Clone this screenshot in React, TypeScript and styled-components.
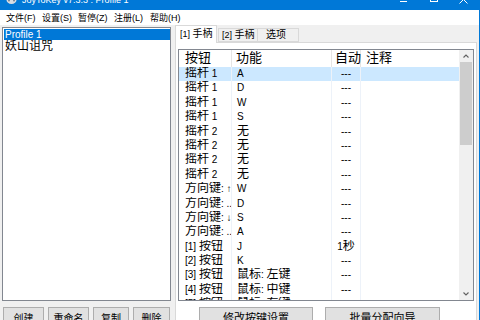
import React from "react";
import styled, { createGlobalStyle } from "styled-components";

const GlobalStyle = createGlobalStyle`
    html, body {
        margin: 0;
        padding: 0;
        background: #f0f0f0;
    }
    body {
        font-family: "Liberation Sans", "Noto Sans CJK SC", sans-serif;
        color: #000;
    }
`;

const Window = styled.div`
    width: 480px;
    height: 320px;
    box-sizing: border-box;
    border-right: 1px solid #0078d7;
    background: #f0f0f0;
    display: flex;
    flex-direction: column;
    overflow: hidden;
`;

const TitleBar = styled.div`
    height: 10px;
    flex-shrink: 0;
    background: #0078d7;
    display: flex;
    align-items: flex-start;
    overflow: hidden;
`;

const TitleIcon = styled.svg`
    margin-left: 6px;
    width: 11px;
    height: 10px;
`;

const TitleText = styled.span`
    margin: -4px 0 0 5px;
    font-size: 9px;
    line-height: 9px;
    color: #fff;
`;

const Controls = styled.div`
    margin-left: auto;
    display: flex;
`;

const ControlButton = styled.div`
    width: 30px;
    height: 10px;
    display: flex;
    justify-content: center;
`;

const MenuBar = styled.div`
    height: 15px;
    flex-shrink: 0;
    background: #fff;
    display: flex;
    align-items: center;
    padding-left: 6px;
    font-size: 9px;
`;

const MenuItem = styled.span`
    width: 36px;
`;

const Body = styled.div`
    flex: 1;
    display: flex;
    min-height: 0;
`;

const LeftPane = styled.div`
    width: 169px;
    margin-left: 2px;
    padding-top: 2px;
    display: flex;
    flex-direction: column;
`;

const ProfileList = styled.div`
    height: 274px;
    flex-shrink: 0;
    box-sizing: border-box;
    border: 1px solid #828790;
    background: #fff;
    padding: 1px 0 0 1px;
`;

const ProfileItem = styled.div<{ $selected?: boolean; $height: number }>`
    height: ${(p) => p.$height}px;
    line-height: ${(p) => p.$height}px;
    font-size: 10px;
    padding-left: 1px;
    white-space: nowrap;
    overflow: hidden;
    background: ${(p) => (p.$selected ? "#0078d7" : "transparent")};
    color: ${(p) => (p.$selected ? "#fff" : "#000")};
`;

const ButtonBar = styled.div<{ $indent?: number }>`
    display: flex;
    gap: ${(p) => (p.$indent ? 12 : 4)}px;
    margin-top: 6px;
    padding-left: ${(p) => p.$indent || 1}px;
`;

const Button = styled.div<{ $width: number; $size: number }>`
    width: ${(p) => p.$width}px;
    height: 20px;
    box-sizing: border-box;
    flex-shrink: 0;
    background: #e1e1e1;
    border: 1px solid #adadad;
    display: flex;
    justify-content: center;
    align-items: center;
    font-size: ${(p) => p.$size}px;
    white-space: nowrap;
`;

const RightPane = styled.div`
    flex: 1;
    margin: 0 2px 0 4px;
    display: flex;
    flex-direction: column;
    min-width: 0;
`;

const TabStrip = styled.div`
    height: 17px;
    flex-shrink: 0;
    display: flex;
    align-items: flex-end;
    position: relative;
    z-index: 1;
`;

const Tab = styled.div<{ $active?: boolean; $width: number; $pad: number }>`
    width: ${(p) => p.$width}px;
    height: ${(p) => (p.$active ? 18 : 14)}px;
    margin-bottom: ${(p) => (p.$active ? -1 : 0)}px;
    margin-right: ${(p) => (p.$active ? 1 : -1)}px;
    box-sizing: border-box;
    border: 1px solid #d9d9d9;
    border-bottom: ${(p) => (p.$active ? "none" : "1px solid #d9d9d9")};
    background: ${(p) => (p.$active ? "#fff" : "#f0f0f0")};
    padding-left: ${(p) => p.$pad}px;
    line-height: ${(p) => (p.$active ? 16 : 12)}px;
    font-size: 9px;
    white-space: nowrap;
    overflow: hidden;
`;

const TabPage = styled.div`
    flex: 1;
    background: #fff;
    border: 1px solid #d9d9d9;
    padding: 6px 2px 0 2px;
    display: flex;
    flex-direction: column;
`;

const ListView = styled.div`
    height: 252px;
    flex-shrink: 0;
    box-sizing: border-box;
    border: 1px solid #828790;
    display: flex;
    overflow: hidden;
`;

const ListContent = styled.div`
    flex: 1;
    display: flex;
    flex-direction: column;
    overflow: hidden;
`;

const Columns = "53px 100px 29px 1fr";

const HeaderRow = styled.div`
    height: 17px;
    flex-shrink: 0;
    display: grid;
    grid-template-columns: ${Columns};
`;

const HeaderCell = styled.div<{ $pad: number }>`
    padding-left: ${(p) => p.$pad}px;
    border-right: 1px solid #e5e5e5;
    font-size: 13px;
    line-height: 15px;
    white-space: nowrap;
    &:last-child {
        border-right: none;
    }
`;

const Row = styled.div<{ $selected?: boolean }>`
    height: 14.4px;
    flex-shrink: 0;
    display: grid;
    grid-template-columns: ${Columns};
    background: ${(p) => (p.$selected ? "#cce8ff" : "transparent")};
`;

const Cell = styled.div<{ $pad?: number; $center?: boolean }>`
    padding-left: ${(p) => p.$pad || 0}px;
    text-align: ${(p) => (p.$center ? "center" : "left")};
    border-right: 1px solid #edf2f9;
    font-size: 10px;
    line-height: 14px;
    white-space: nowrap;
    overflow: hidden;
    &:last-child {
        border-right: none;
    }
`;

const Han = styled.span<{ $size: number }>`
    font-size: ${(p) => p.$size}px;
    line-height: 1;
`;

const ScrollBar = styled.div`
    width: 14px;
    flex-shrink: 0;
    background: #f0f0f0;
    display: flex;
    flex-direction: column;
`;

const ScrollArrow = styled.div`
    height: 12px;
    display: flex;
    justify-content: center;
    align-items: center;
`;

const ScrollThumb = styled.div`
    height: 83px;
    margin: 0 1px;
    background: #cdcdcd;
`;

const Spacer = styled.div`
    flex: 1;
`;

const HAN_RUN = /[\u3400-\u9fff\u3000-\u303f]+|[^\u3400-\u9fff\u3000-\u303f]+/g;

const Mixed = ({ text, han }: { text: string; han: number }) => (
    <span>
        {(text.match(HAN_RUN) ?? []).map((run, i) =>
            /[\u3400-\u9fff]/.test(run) ? (
                <Han key={i} $size={han}>{run}</Han>
            ) : (
                <span key={i}>{run}</span>
            )
        )}
    </span>
);

const rows: [string, string, string][] = [
    ["摇杆 1", "A", "---"],
    ["摇杆 1", "D", "---"],
    ["摇杆 1", "W", "---"],
    ["摇杆 1", "S", "---"],
    ["摇杆 2", "无", "---"],
    ["摇杆 2", "无", "---"],
    ["摇杆 2", "无", "---"],
    ["摇杆 2", "无", "---"],
    ["方向键: ↑", "W", "---"],
    ["方向键: ...", "D", "---"],
    ["方向键: ↓", "S", "---"],
    ["方向键: ...", "A", "---"],
    ["[1] 按钮", "J", "1秒"],
    ["[2] 按钮", "K", "---"],
    ["[3] 按钮", "鼠标: 左键", "---"],
    ["[4] 按钮", "鼠标: 中键", "---"],
    ["[5] 按钮", "鼠标: 右键", "---"],
];

const Chevron = ({ up }: { up?: boolean }) => (
    <svg width="6" height="4" viewBox="0 0 6 4">
        <polyline
            points={up ? "0.5,3.5 3,1 5.5,3.5" : "0.5,0.5 3,3 5.5,0.5"}
            fill="none"
            stroke="#606060"
            strokeWidth="1.1"
        />
    </svg>
);

const App = () => {
    return (
        <Window>
            <GlobalStyle />
            <TitleBar>
                <TitleIcon viewBox="0 0 11 10">
                    <ellipse cx="5.5" cy="0" rx="5" ry="4" fill="#d8dde3" />
                    <circle cx="3" cy="0.5" r="1" fill="#7a8594" />
                    <circle cx="8" cy="0.5" r="1" fill="#7a8594" />
                </TitleIcon>
                <TitleText>JoyToKey v7.3.3 : Profile 1</TitleText>
                <Controls>
                    <ControlButton>
                        <svg width="10" height="10" viewBox="0 0 10 10">
                            <line x1="1" y1="1.5" x2="8" y2="1.5" stroke="#fff" strokeWidth="1" />
                        </svg>
                    </ControlButton>
                    <ControlButton>
                        <svg width="10" height="10" viewBox="0 0 10 10">
                            <rect x="1.5" y="-6" width="7" height="7.5" fill="none" stroke="#fff" strokeWidth="1" />
                        </svg>
                    </ControlButton>
                    <ControlButton>
                        <svg width="10" height="10" viewBox="0 0 10 10">
                            <line x1="0.5" y1="-4.5" x2="8.5" y2="3.5" stroke="#fff" strokeWidth="1" />
                            <line x1="8.5" y1="-4.5" x2="0.5" y2="3.5" stroke="#fff" strokeWidth="1" />
                        </svg>
                    </ControlButton>
                </Controls>
            </TitleBar>
            <MenuBar>
                <MenuItem>文件(F)</MenuItem>
                <MenuItem>设置(S)</MenuItem>
                <MenuItem>暂停(Z)</MenuItem>
                <MenuItem>注册(L)</MenuItem>
                <MenuItem>帮助(H)</MenuItem>
            </MenuBar>
            <Body>
                <LeftPane>
                    <ProfileList>
                        <ProfileItem $selected $height={11}>Profile 1</ProfileItem>
                        <ProfileItem $height={13}>
                            <Mixed text="妖山诅咒" han={12} />
                        </ProfileItem>
                    </ProfileList>
                    <ButtonBar>
                        <Button $width={41} $size={10}>创建</Button>
                        <Button $width={41} $size={10}>重命名</Button>
                        <Button $width={36} $size={10}>复制</Button>
                        <Button $width={37} $size={10}>删除</Button>
                    </ButtonBar>
                </LeftPane>
                <RightPane>
                    <TabStrip>
                        <Tab $active $width={42} $pad={4}>
                            <Mixed text="[1] 手柄" han={10} />
                        </Tab>
                        <Tab $width={40} $pad={3}>
                            <Mixed text="[2] 手柄" han={10} />
                        </Tab>
                        <Tab $width={42} $pad={8}>
                            <Mixed text="选项" han={10} />
                        </Tab>
                    </TabStrip>
                    <TabPage>
                        <ListView>
                            <ListContent>
                                <HeaderRow>
                                    <HeaderCell $pad={6}>按钮</HeaderCell>
                                    <HeaderCell $pad={4}>功能</HeaderCell>
                                    <HeaderCell $pad={3}>自动</HeaderCell>
                                    <HeaderCell $pad={5}>注释</HeaderCell>
                                </HeaderRow>
                                {rows.map(([button, action, auto], i) => (
                                    <Row key={i} $selected={i === 0}>
                                        <Cell $pad={6}>
                                            <Mixed text={button} han={12} />
                                        </Cell>
                                        <Cell $pad={5}>
                                            <Mixed text={action} han={12} />
                                        </Cell>
                                        <Cell $center>
                                            <Mixed text={auto} han={12} />
                                        </Cell>
                                        <Cell />
                                    </Row>
                                ))}
                            </ListContent>
                            <ScrollBar>
                                <ScrollArrow>
                                    <Chevron up />
                                </ScrollArrow>
                                <ScrollThumb />
                                <Spacer />
                                <ScrollArrow>
                                    <Chevron />
                                </ScrollArrow>
                            </ScrollBar>
                        </ListView>
                        <ButtonBar $indent={21}>
                            <Button $width={114} $size={11}>修改按键设置</Button>
                            <Button $width={115} $size={11}>批量分配向导</Button>
                        </ButtonBar>
                    </TabPage>
                </RightPane>
            </Body>
        </Window>
    );
};

export default App;
